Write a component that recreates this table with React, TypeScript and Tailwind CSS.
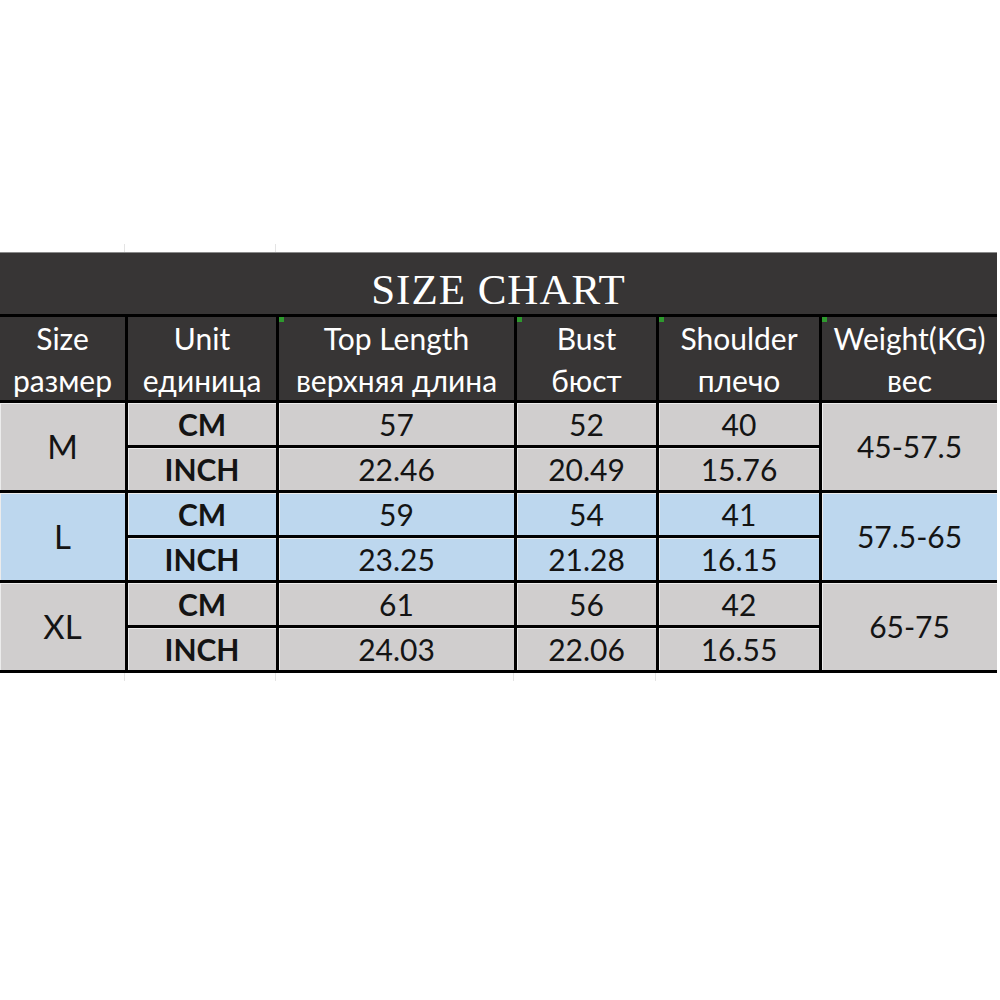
import React from 'react';

type Row = {
  size: string;
  tone: 'gray' | 'blue';
  weight: string;
  cm: [string, string, string];
  inch: [string, string, string];
};

const rows: Row[] = [
  { size: 'M', tone: 'gray', weight: '45-57.5', cm: ['57', '52', '40'], inch: ['22.46', '20.49', '15.76'] },
  { size: 'L', tone: 'blue', weight: '57.5-65', cm: ['59', '54', '41'], inch: ['23.25', '21.28', '16.15'] },
  { size: 'XL', tone: 'gray', weight: '65-75', cm: ['61', '56', '42'], inch: ['24.03', '22.06', '16.55'] },
];

const cols = 'grid-cols-[125px_148px_235px_139px_160px_175px]';

// little green comment marker in the corner of a header cell
const Marker = () => <span className="absolute left-0 top-0 h-[5px] w-[5px] bg-[#2e9a2e]" />;

const HeadCell = ({ top, bottom, marker = false }: { top: string; bottom: string; marker?: boolean }) => (
  <div className="relative flex flex-col items-center justify-center bg-[#373535] text-[30px] leading-[42px] text-white">
    {marker && <Marker />}
    <span>{top}</span>
    <span>{bottom}</span>
  </div>
);

export default function App() {
  return (
    <div className="h-[1000px] w-[1000px] bg-white pt-[244px] font-['Lato','Noto_Sans',sans-serif]">
      {/* faint gridline ticks above the table */}
      <div className={`grid ${cols} h-[8px] gap-x-[3px]`}>
        <div className="border-r border-[#e4e4e4]" />
        <div className="border-r border-[#e4e4e4]" />
        <div />
        <div />
        <div />
        <div />
      </div>

      <div
        className={`grid w-[997px] ${cols} grid-rows-[61px_83px_repeat(6,42px)] gap-[3px] border-t border-[#8a8a8a] bg-black pb-[3px]`}
      >
        <div className="col-span-6 flex items-end justify-center bg-[#373535] pb-[3px] font-['Liberation_Serif',serif] text-[43px] leading-none tracking-[1px] text-white">
          SIZE CHART
        </div>

        <HeadCell top="Size" bottom="размер" />
        <HeadCell top="Unit" bottom="единица" />
        <HeadCell top="Top Length" bottom="верхняя длина" marker />
        <HeadCell top="Bust" bottom="бюст" marker />
        <HeadCell top="Shoulder" bottom="плечо" marker />
        <HeadCell top="Weight(KG)" bottom="вес" marker />

        {rows.map((r) => {
          const bg = r.tone === 'blue' ? 'bg-[#bdd7ee]' : 'bg-[#d0cece]';
          const cell = `${bg} flex items-center justify-center text-[30px] text-[#141414] shadow-[inset_1px_1px_0_#ececec]`;
          return (
            <React.Fragment key={r.size}>
              <div className={`${cell} row-span-2 text-[33px]`}>{r.size}</div>
              <div className={`${cell} font-bold text-[29px]`}>CM</div>
              {r.cm.map((v, i) => (
                <div key={`cm-${i}`} className={cell}>
                  {v}
                </div>
              ))}
              <div className={`${cell} row-span-2`}>{r.weight}</div>
              <div className={`${cell} font-bold text-[29px]`}>INCH</div>
              {r.inch.map((v, i) => (
                <div key={`in-${i}`} className={cell}>
                  {v}
                </div>
              ))}
            </React.Fragment>
          );
        })}
      </div>

      {/* faint gridline ticks under the table */}
      <div className={`grid ${cols} h-[8px] gap-x-[3px]`}>
        <div className="border-r border-[#e4e4e4]" />
        <div className="border-r border-[#e4e4e4]" />
        <div className="border-r border-[#e4e4e4]" />
        <div className="border-r border-[#e4e4e4]" />
        <div />
        <div />
      </div>
    </div>
  );
}
